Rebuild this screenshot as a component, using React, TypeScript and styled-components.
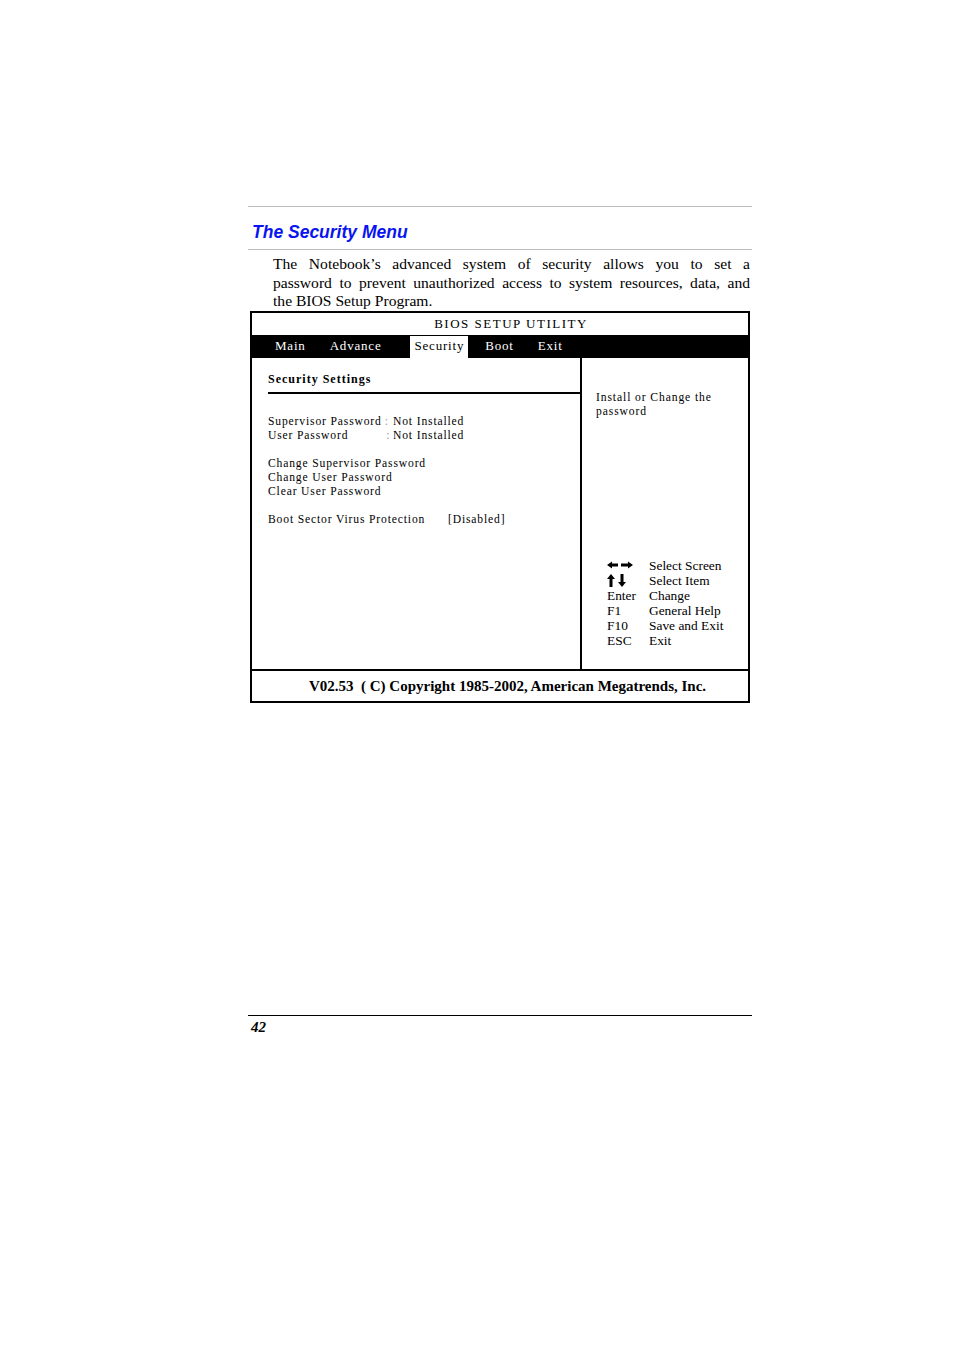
import React from "react";
import styled, { createGlobalStyle } from "styled-components";

const GlobalStyle = createGlobalStyle`
  html, body {
    margin: 0;
    padding: 0;
    background: #ffffff;
  }
  body {
    font-family: "Liberation Serif", "Times New Roman", serif;
    color: #000;
  }
`;

const Page = styled.div`
  width: 504px;
  margin-left: 248px;
  padding-top: 206px;
`;

const Rule = styled.div<{ $color?: string }>`
  height: 1px;
  background: ${(p) => p.$color || "#bdbdbd"};
`;

const Title = styled.h2`
  margin: 14px 0 6px 0;
  padding-left: 4px;
  font-family: "Liberation Sans", Arial, sans-serif;
  font-size: 17.5px;
  font-weight: bold;
  font-style: italic;
  line-height: 22px;
  color: #0a14f0;
`;

const Intro = styled.div`
  margin: 5px 2px 0 25px;
  font-size: 15.6px;
  line-height: 18.5px;
`;

const IntroLine = styled.div<{ $last?: boolean }>`
  text-align: ${(p) => (p.$last ? "left" : "justify")};
  text-align-last: ${(p) => (p.$last ? "left" : "justify")};
  white-space: nowrap;
`;

const BiosBox = styled.div`
  width: 500px;
  box-sizing: border-box;
  margin: 0 0 0 2px;
  border: 2px solid #000;
  display: flex;
  flex-direction: column;
`;

const BiosHeader = styled.div`
  height: 22px;
  line-height: 22px;
  text-align: center;
  padding-left: 22px;
  font-size: 13px;
  letter-spacing: 1.5px;
`;

const MenuBar = styled.div`
  height: 23px;
  background: #000;
  display: flex;
  align-items: flex-start;
  padding-left: 19px;
`;

const Tab = styled.div<{ $active?: boolean; $ml: number }>`
  margin-left: ${(p) => p.$ml}px;
  margin-top: 1px;
  height: 22px;
  line-height: 20px;
  padding: 0 4px;
  font-size: 13px;
  letter-spacing: 0.8px;
  color: ${(p) => (p.$active ? "#000" : "#fff")};
  background: ${(p) => (p.$active ? "#fff" : "transparent")};
`;

const Panels = styled.div`
  height: 311px;
  display: flex;
  border-bottom: 2px solid #000;
`;

const LeftPanel = styled.div`
  width: 330px;
  padding-left: 16px;
  box-sizing: border-box;
  border-right: 2px solid #000;
`;

const RightPanel = styled.div`
  flex: 1;
  display: flex;
  flex-direction: column;
  padding: 33px 0 21px 14px;
`;

const SectionHead = styled.div`
  margin-top: 13px;
  padding-bottom: 5px;
  line-height: 16px;
  font-size: 12px;
  font-weight: bold;
  letter-spacing: 1px;
  border-bottom: 2px solid #000;
`;

const Group = styled.div<{ $mt: number }>`
  margin-top: ${(p) => p.$mt}px;
`;

const Row = styled.div<{ $label?: number }>`
  display: grid;
  grid-template-columns: ${(p) => (p.$label ? `${p.$label}px auto` : "auto")};
  line-height: 14px;
  font-size: 11.6px;
  letter-spacing: 0.85px;
`;

const Colon = styled.span<{ $ml?: number }>`
  color: #999;
  margin-left: ${(p) => p.$ml ?? 3}px;
`;

const HelpText = styled.div`
  font-size: 11.6px;
  letter-spacing: 0.9px;
  line-height: 14px;
`;

const KeyHelp = styled.div`
  margin-top: auto;
  padding-left: 11px;
  display: grid;
  grid-template-columns: 42px auto;
  font-size: 13.4px;
  line-height: 15px;
`;

const KeyCell = styled.div`
  display: flex;
  align-items: center;
  height: 15px;
`;

const Footer = styled.div`
  height: 30px;
  line-height: 30px;
  text-align: center;
  padding-left: 15px;
  font-size: 15px;
  font-weight: bold;
`;

const Spacer = styled.div`
  height: 312px;
`;

const PageNumber = styled.div`
  padding: 2px 0 0 3px;
  line-height: 18px;
  font-size: 15px;
  font-weight: bold;
  font-style: italic;
`;

const LeftRightArrows = () => (
  <svg width="26" height="8" viewBox="0 0 26 8">
    <path d="M0 4 L5 0.5 L5 2.5 L11 2.5 L11 5.5 L5 5.5 L5 7.5 Z" fill="#000" />
    <path d="M26 4 L21 0.5 L21 2.5 L14 2.5 L14 5.5 L21 5.5 L21 7.5 Z" fill="#000" />
  </svg>
);

const UpDownArrows = () => (
  <svg width="19" height="13" viewBox="0 0 19 13">
    <path d="M4 0 L8 5 L5.5 5 L5.5 13 L2.5 13 L2.5 5 L0 5 Z" fill="#000" />
    <path d="M15 13 L19 8 L16.5 8 L16.5 0 L13.5 0 L13.5 8 L11 8 Z" fill="#000" />
  </svg>
);

const tabs = [
  { name: "Main", ml: 0 },
  { name: "Advance", ml: 16 },
  { name: "Security", ml: 25, active: true },
  { name: "Boot", ml: 13 },
  { name: "Exit", ml: 16 },
];

const keys: [React.ReactNode, string][] = [
  [<LeftRightArrows />, "Select Screen"],
  [<UpDownArrows />, "Select Item"],
  ["Enter", "Change"],
  ["F1", "General Help"],
  ["F10", "Save and Exit"],
  ["ESC", "Exit"],
];

const introLines = [
  "The Notebook’s advanced system of security allows you to set a",
  "password to prevent unauthorized access to system resources, data, and",
  "the BIOS Setup Program.",
];

const App: React.FC = () => {
  return (
    <>
      <GlobalStyle />
      <Page>
        <Rule />
        <Title>The Security Menu</Title>
        <Rule />
        <Intro>
          {introLines.map((line, i) => (
            <IntroLine key={i} $last={i === introLines.length - 1}>
              {line}
            </IntroLine>
          ))}
        </Intro>
        <BiosBox>
          <BiosHeader>BIOS SETUP UTILITY</BiosHeader>
          <MenuBar>
            {tabs.map((t) => (
              <Tab key={t.name} $ml={t.ml} $active={t.active}>
                {t.name}
              </Tab>
            ))}
          </MenuBar>
          <Panels>
            <LeftPanel>
              <SectionHead>Security Settings</SectionHead>
              <Group $mt={21}>
                <Row $label={125}>
                  <span>
                    Supervisor Password<Colon>:</Colon>
                  </span>
                  <span>Not Installed</span>
                </Row>
                <Row $label={125}>
                  <span>
                    User Password<Colon $ml={38}>:</Colon>
                  </span>
                  <span>Not Installed</span>
                </Row>
              </Group>
              <Group $mt={14}>
                <Row>Change Supervisor Password</Row>
                <Row>Change User Password</Row>
                <Row>Clear User Password</Row>
              </Group>
              <Group $mt={14}>
                <Row $label={180}>
                  <span>Boot Sector Virus Protection</span>
                  <span>[Disabled]</span>
                </Row>
              </Group>
            </LeftPanel>
            <RightPanel>
              <HelpText>
                Install or Change the
                <br />
                password
              </HelpText>
              <KeyHelp>
                {keys.map(([k, label], i) => (
                  <React.Fragment key={i}>
                    <KeyCell>{k}</KeyCell>
                    <KeyCell>{label}</KeyCell>
                  </React.Fragment>
                ))}
              </KeyHelp>
            </RightPanel>
          </Panels>
          <Footer>
            V02.53&nbsp; ( C) Copyright 1985-2002, American Megatrends, Inc.
          </Footer>
        </BiosBox>
        <Spacer />
        <Rule $color="#000" />
        <PageNumber>42</PageNumber>
      </Page>
    </>
  );
};

export default App;
